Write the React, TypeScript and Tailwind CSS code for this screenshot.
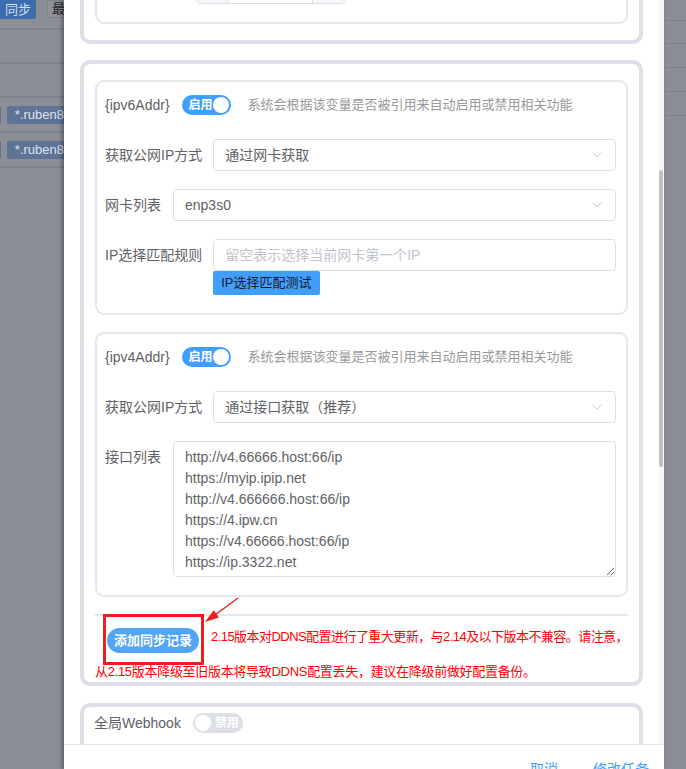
import React from "react";
import { ChevronDown } from "lucide-react";

const urls = [
  "http://v4.66666.host:66/ip",
  "https://myip.ipip.net",
  "http://v4.666666.host:66/ip",
  "https://4.ipw.cn",
  "https://v4.66666.host:66/ip",
  "https://ip.3322.net",
];

const OnSwitch = () => (
  <div className="flex h-[20px] w-[49px] items-center rounded-full bg-[#409eff]">
    <span className="pl-[7px] text-[12px] font-bold leading-none text-white">启用</span>
    <span className="ml-auto mr-[2px] h-[16px] w-[16px] rounded-full bg-white" />
  </div>
);

const OffSwitch = () => (
  <div className="flex h-[20px] w-[50px] items-center rounded-full bg-[#dcdfe6]">
    <span className="ml-[2px] h-[16px] w-[16px] rounded-full bg-white" />
    <span className="ml-[4px] text-[12px] font-bold leading-none text-white">禁用</span>
  </div>
);

const Select = ({ value }: { value: string }) => (
  <div className="flex h-[32px] flex-1 items-center rounded-[4px] border border-[#dcdfe6] pl-[11px] pr-[10px]">
    <span className="text-[14px] text-[#606266]">{value}</span>
    <ChevronDown size={16} strokeWidth={1.4} className="ml-auto text-[#c0c4cc]" />
  </div>
);

const Label = ({ children }: { children: React.ReactNode }) => (
  <span className="shrink-0 text-[14px] text-[#606266]">{children}</span>
);

const VarRow = ({ name }: { name: string }) => (
  <div className="flex h-[32px] items-center">
    <Label>{name}</Label>
    <div className="ml-[12px]">
      <OnSwitch />
    </div>
    <span className="ml-[17px] text-[13px] text-[#999]">
      系统会根据该变量是否被引用来自动启用或禁用相关功能
    </span>
  </div>
);

const Card = ({ children, className = "" }: { children: React.ReactNode; className?: string }) => (
  <div
    className={`flex flex-col gap-[18px] rounded-[9px] border-2 border-[#e4e7ed] pb-[18px] pl-[8px] pr-[10px] pt-[7px] ${className}`}
  >
    {children}
  </div>
);

const App = () => {
  return (
    <div className="flex h-[769px] w-[686px] overflow-hidden bg-[#8b8e95] font-['Liberation_Sans','Noto_Sans_CJK_SC',sans-serif]">
      {/* page behind the dialog, dimmed */}
      <div className="w-[64px] shrink-0 overflow-hidden">
        <div className="flex h-[30px] items-start gap-[11px] border-b-2 border-[#7f828a]">
          <div className="flex h-[19px] w-[36px] shrink-0 items-center justify-end rounded-br-[3px] bg-[#3c6dae] pr-[5px] text-[13px] text-[#d3dcea]">
            同步
          </div>
          <div className="h-[18px] flex-1 rounded-bl-[3px] border border-[#7f828a] bg-[#8f9299] pl-[4px] text-[13px] leading-[16px] text-[#222]">
            最
          </div>
        </div>
        <div className="h-[34px] border-b-2 border-[#7f828a]" />
        <div className="h-[34px] border-b-2 border-[#7f828a]" />
        <div className="flex h-[35px] items-center gap-[6px] border-b-2 border-[#7f828a]">
          <div className="h-[18px] w-[2px] rounded-r-[3px] bg-[#5d7397]" />
          <div className="flex h-[18px] flex-1 items-center whitespace-nowrap rounded-l-[3px] bg-[#5d7397] pl-[8px] text-[13px] text-[#dde3ec]">
            *.ruben8
          </div>
        </div>
        <div className="flex h-[35px] items-center gap-[6px] border-b-2 border-[#7f828a]">
          <div className="h-[18px] w-[2px] rounded-r-[3px] bg-[#5d7397]" />
          <div className="flex h-[18px] flex-1 items-center whitespace-nowrap rounded-l-[3px] bg-[#5d7397] pl-[8px] text-[13px] text-[#dde3ec]">
            *.ruben8
          </div>
        </div>
      </div>

      {/* dialog */}
      <div className="flex h-[769px] w-[600px] shrink-0 flex-col bg-white shadow-[-2px_0_4px_rgba(0,0,0,0.35)]">
        <div className="flex h-[744px] shrink-0 overflow-hidden">
          <div className="flex-1 overflow-hidden px-4">
            <div className="-mt-[57px] flex flex-col gap-4">
              {/* previous block, mostly scrolled away */}
              <div className="rounded-[10px] border-4 border-[#dcdfe6] px-[11px] py-4">
                <Card>
                  <div className="flex h-[32px] items-center gap-[12px]">
                    <span className="w-[79px] text-[14px] text-[#606266]">同步间隔</span>
                    <div className="flex h-[32px] w-[149px] overflow-hidden rounded-[4px] border border-[#dcdfe6]">
                      <div className="w-[32px] border-r border-[#dcdfe6] bg-[#f5f7fa]" />
                      <div className="flex-1" />
                      <div className="w-[32px] border-l border-[#dcdfe6] bg-[#f5f7fa]" />
                    </div>
                  </div>
                </Card>
              </div>

              {/* DDNS block */}
              <div className="rounded-[10px] border-4 border-[#dcdfe6] px-[11px] pb-[1px] pt-4">
                <Card>
                  <VarRow name="{ipv6Addr}" />
                  <div className="flex items-center gap-[11px]">
                    <Label>获取公网IP方式</Label>
                    <Select value="通过网卡获取" />
                  </div>
                  <div className="flex items-center gap-[12px]">
                    <Label>网卡列表</Label>
                    <Select value="enp3s0" />
                  </div>
                  <div className="flex items-start gap-[11px]">
                    <span className="shrink-0 text-[14px] leading-[32px] text-[#606266]">IP选择匹配规则</span>
                    <div className="flex flex-1 flex-col items-start">
                      <div className="flex h-[32px] w-full items-center rounded-[4px] border border-[#dcdfe6] px-[11px] text-[14px] text-[#c0c4cc]">
                        留空表示选择当前网卡第一个IP
                      </div>
                      <button className="h-[24px] rounded-[2px] bg-[#409eff] px-[8px] text-[13px] text-[#1a1a1a]">
                        IP选择匹配测试
                      </button>
                    </div>
                  </div>
                </Card>

                <Card className="mt-[17px]">
                  <VarRow name="{ipv4Addr}" />
                  <div className="flex items-center gap-[11px]">
                    <Label>获取公网IP方式</Label>
                    <Select value="通过接口获取（推荐）" />
                  </div>
                  <div className="flex items-start gap-[12px]">
                    <span className="shrink-0 text-[14px] leading-[32px] text-[#606266]">接口列表</span>
                    <textarea
                      readOnly
                      value={urls.join("\n")}
                      className="h-[136px] flex-1 resize-y overflow-hidden rounded-[4px] border border-[#dcdfe6] px-[11px] py-[5px] text-[14px] leading-[21px] text-[#606266] outline-none"
                    />
                  </div>
                </Card>

                <div className="mt-[17px] h-[2px] bg-[#e4e7ed]" />

                <div className="mt-[12px] flex items-start">
                  <div className="relative ml-[12px] shrink-0">
                    <button className="h-[25px] w-[92px] rounded-full bg-[#51a5f5] text-[13px] font-bold text-white">
                      添加同步记录
                    </button>
                    <div className="absolute -bottom-[12px] -left-[4px] -right-[5px] -top-[14px] border-[3px] border-[#f21c1c]" />
                    <svg
                      className="absolute left-[93px] top-[-34px]"
                      width="42"
                      height="34"
                      viewBox="0 0 42 34"
                    >
                      <line x1="38" y1="4" x2="15" y2="21" stroke="#f21c1c" strokeWidth="1.5" />
                      <polygon points="5,28 18.9,23.4 13.7,16.2" fill="#f21c1c" />
                    </svg>
                  </div>
                  <span className="ml-[12px] whitespace-nowrap text-[13px] leading-[18px] tracking-[-0.55px] text-[#ff0000]">
                    2.15版本对DDNS配置进行了重大更新，与2.14及以下版本不兼容。请注意，
                  </span>
                </div>
                <p className="mt-[10px] whitespace-nowrap text-[13px] leading-[18px] tracking-[-0.3px] text-[#ff0000]">
                  从2.15版本降级至旧版本将导致DDNS配置丢失，建议在降级前做好配置备份。
                </p>
              </div>

              {/* webhook block */}
              <div className="mt-px rounded-[10px] border-4 border-[#dcdfe6] px-[10px] pb-4">
                <div className="flex h-[32px] items-center gap-[12px]">
                  <Label>全局Webhook</Label>
                  <OffSwitch />
                </div>
              </div>
            </div>
          </div>
          {/* scrollbar */}
          <div className="w-[5px] shrink-0 bg-[#f7f7f7]">
            <div className="mt-[170px] h-[297px] w-[4px] rounded-full bg-[#c1c1c1]" />
          </div>
        </div>

        {/* footer */}
        <div className="flex flex-1 items-start justify-end gap-[35px] border-t border-[#e4e7ed] pr-[15px] pt-[14px] text-[14px] leading-[20px] text-[#409eff]">
          <span>取消</span>
          <span>修改任务</span>
        </div>
      </div>

      {/* right strip */}
      <div className="flex-1 overflow-hidden">
        <div className="h-[21px] border-b border-[#7f828a]" />
        <div className="h-[23px] border-b border-[#7f828a]" />
        <div className="h-[24px] border-b border-[#7f828a]" />
        <div className="h-[24px] border-b border-[#7f828a]" />
        <div className="h-[24px] border-b border-[#7f828a]" />
      </div>
    </div>
  );
};

export default App;
